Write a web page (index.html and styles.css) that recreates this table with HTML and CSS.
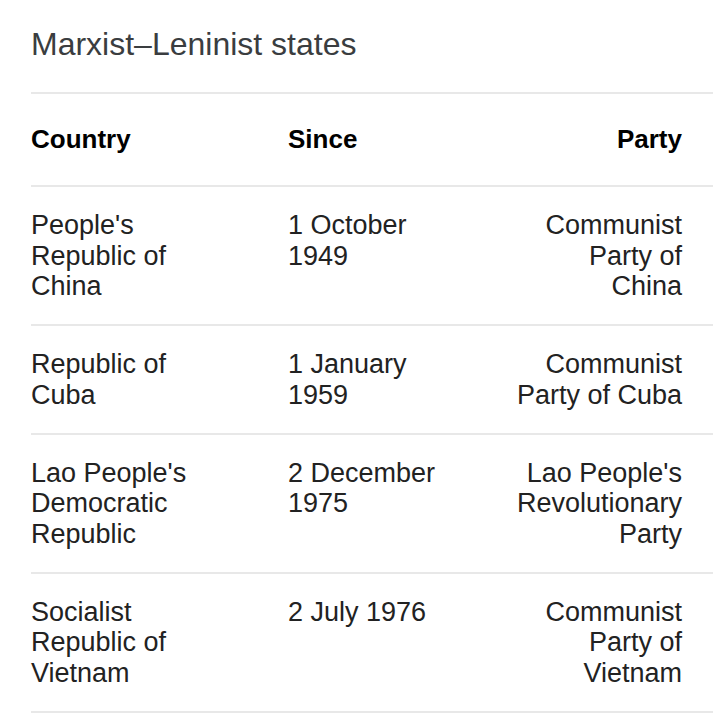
FILE: index.html
```html
<!DOCTYPE html>
<html lang="en">
<head>
<meta charset="utf-8">
<title>Marxist–Leninist states</title>
<link rel="stylesheet" href="styles.css">
</head>
<body>
<div class="card">
  <h2 class="title">Marxist–Leninist states</h2>
  <table class="states">
    <colgroup>
      <col class="c-country">
      <col class="c-since">
      <col class="c-party">
    </colgroup>
    <thead>
      <tr>
        <th class="country">Country</th>
        <th class="since">Since</th>
        <th class="party">Party</th>
      </tr>
    </thead>
    <tbody>
      <tr>
        <td class="country"><div class="cell">People's Republic of China</div></td>
        <td class="since"><div class="cell">1 October 1949</div></td>
        <td class="party"><div class="cell">Communist Party of China</div></td>
      </tr>
      <tr>
        <td class="country"><div class="cell">Republic of Cuba</div></td>
        <td class="since"><div class="cell">1 January 1959</div></td>
        <td class="party"><div class="cell">Communist Party of Cuba</div></td>
      </tr>
      <tr>
        <td class="country"><div class="cell">Lao People's Democratic Republic</div></td>
        <td class="since"><div class="cell">2 December 1975</div></td>
        <td class="party"><div class="cell">Lao People's Revolutionary Party</div></td>
      </tr>
      <tr>
        <td class="country"><div class="cell">Socialist Republic of Vietnam</div></td>
        <td class="since"><div class="cell">2 July 1976</div></td>
        <td class="party"><div class="cell">Communist Party of Vietnam</div></td>
      </tr>
    </tbody>
  </table>
</div>
</body>
</html>
```
FILE: styles.css
```css
html, body {
  margin: 0;
  padding: 0;
  background: #ffffff;
}

body {
  font-family: "Liberation Sans", Arial, Helvetica, sans-serif;
  color: #222222;
}

.card {
  padding-left: 31px;
}

.title {
  margin: 0;
  padding-top: 24px;
  margin-bottom: 28px;
  font-size: 32px;
  line-height: 40px;
  font-weight: normal;
  color: #3a3d40;
}

.states {
  width: 682px;
  border-collapse: collapse;
  table-layout: fixed;
}

.c-country { width: 257px; }
.c-since { width: 226px; }
.c-party { width: 199px; }

.states th,
.states td {
  border-top: 2px solid #e8e8e8;
  vertical-align: top;
  text-align: left;
  padding: 0;
}

.states tbody tr:last-child td {
  border-bottom: 2px solid #e8e8e8;
}

.states th {
  font-size: 26px;
  line-height: 30px;
  font-weight: bold;
  color: #000000;
  padding-top: 30px;
  padding-bottom: 31px;
}

.states td {
  font-size: 27px;
  line-height: 30.5px;
  padding-top: 23px;
  padding-bottom: 22.5px;
}

.states .party {
  text-align: right;
  padding-right: 31px;
}

.country .cell { width: 190px; }
.since .cell { width: 155px; }
.party .cell { width: 168px; margin-left: auto; }
```
